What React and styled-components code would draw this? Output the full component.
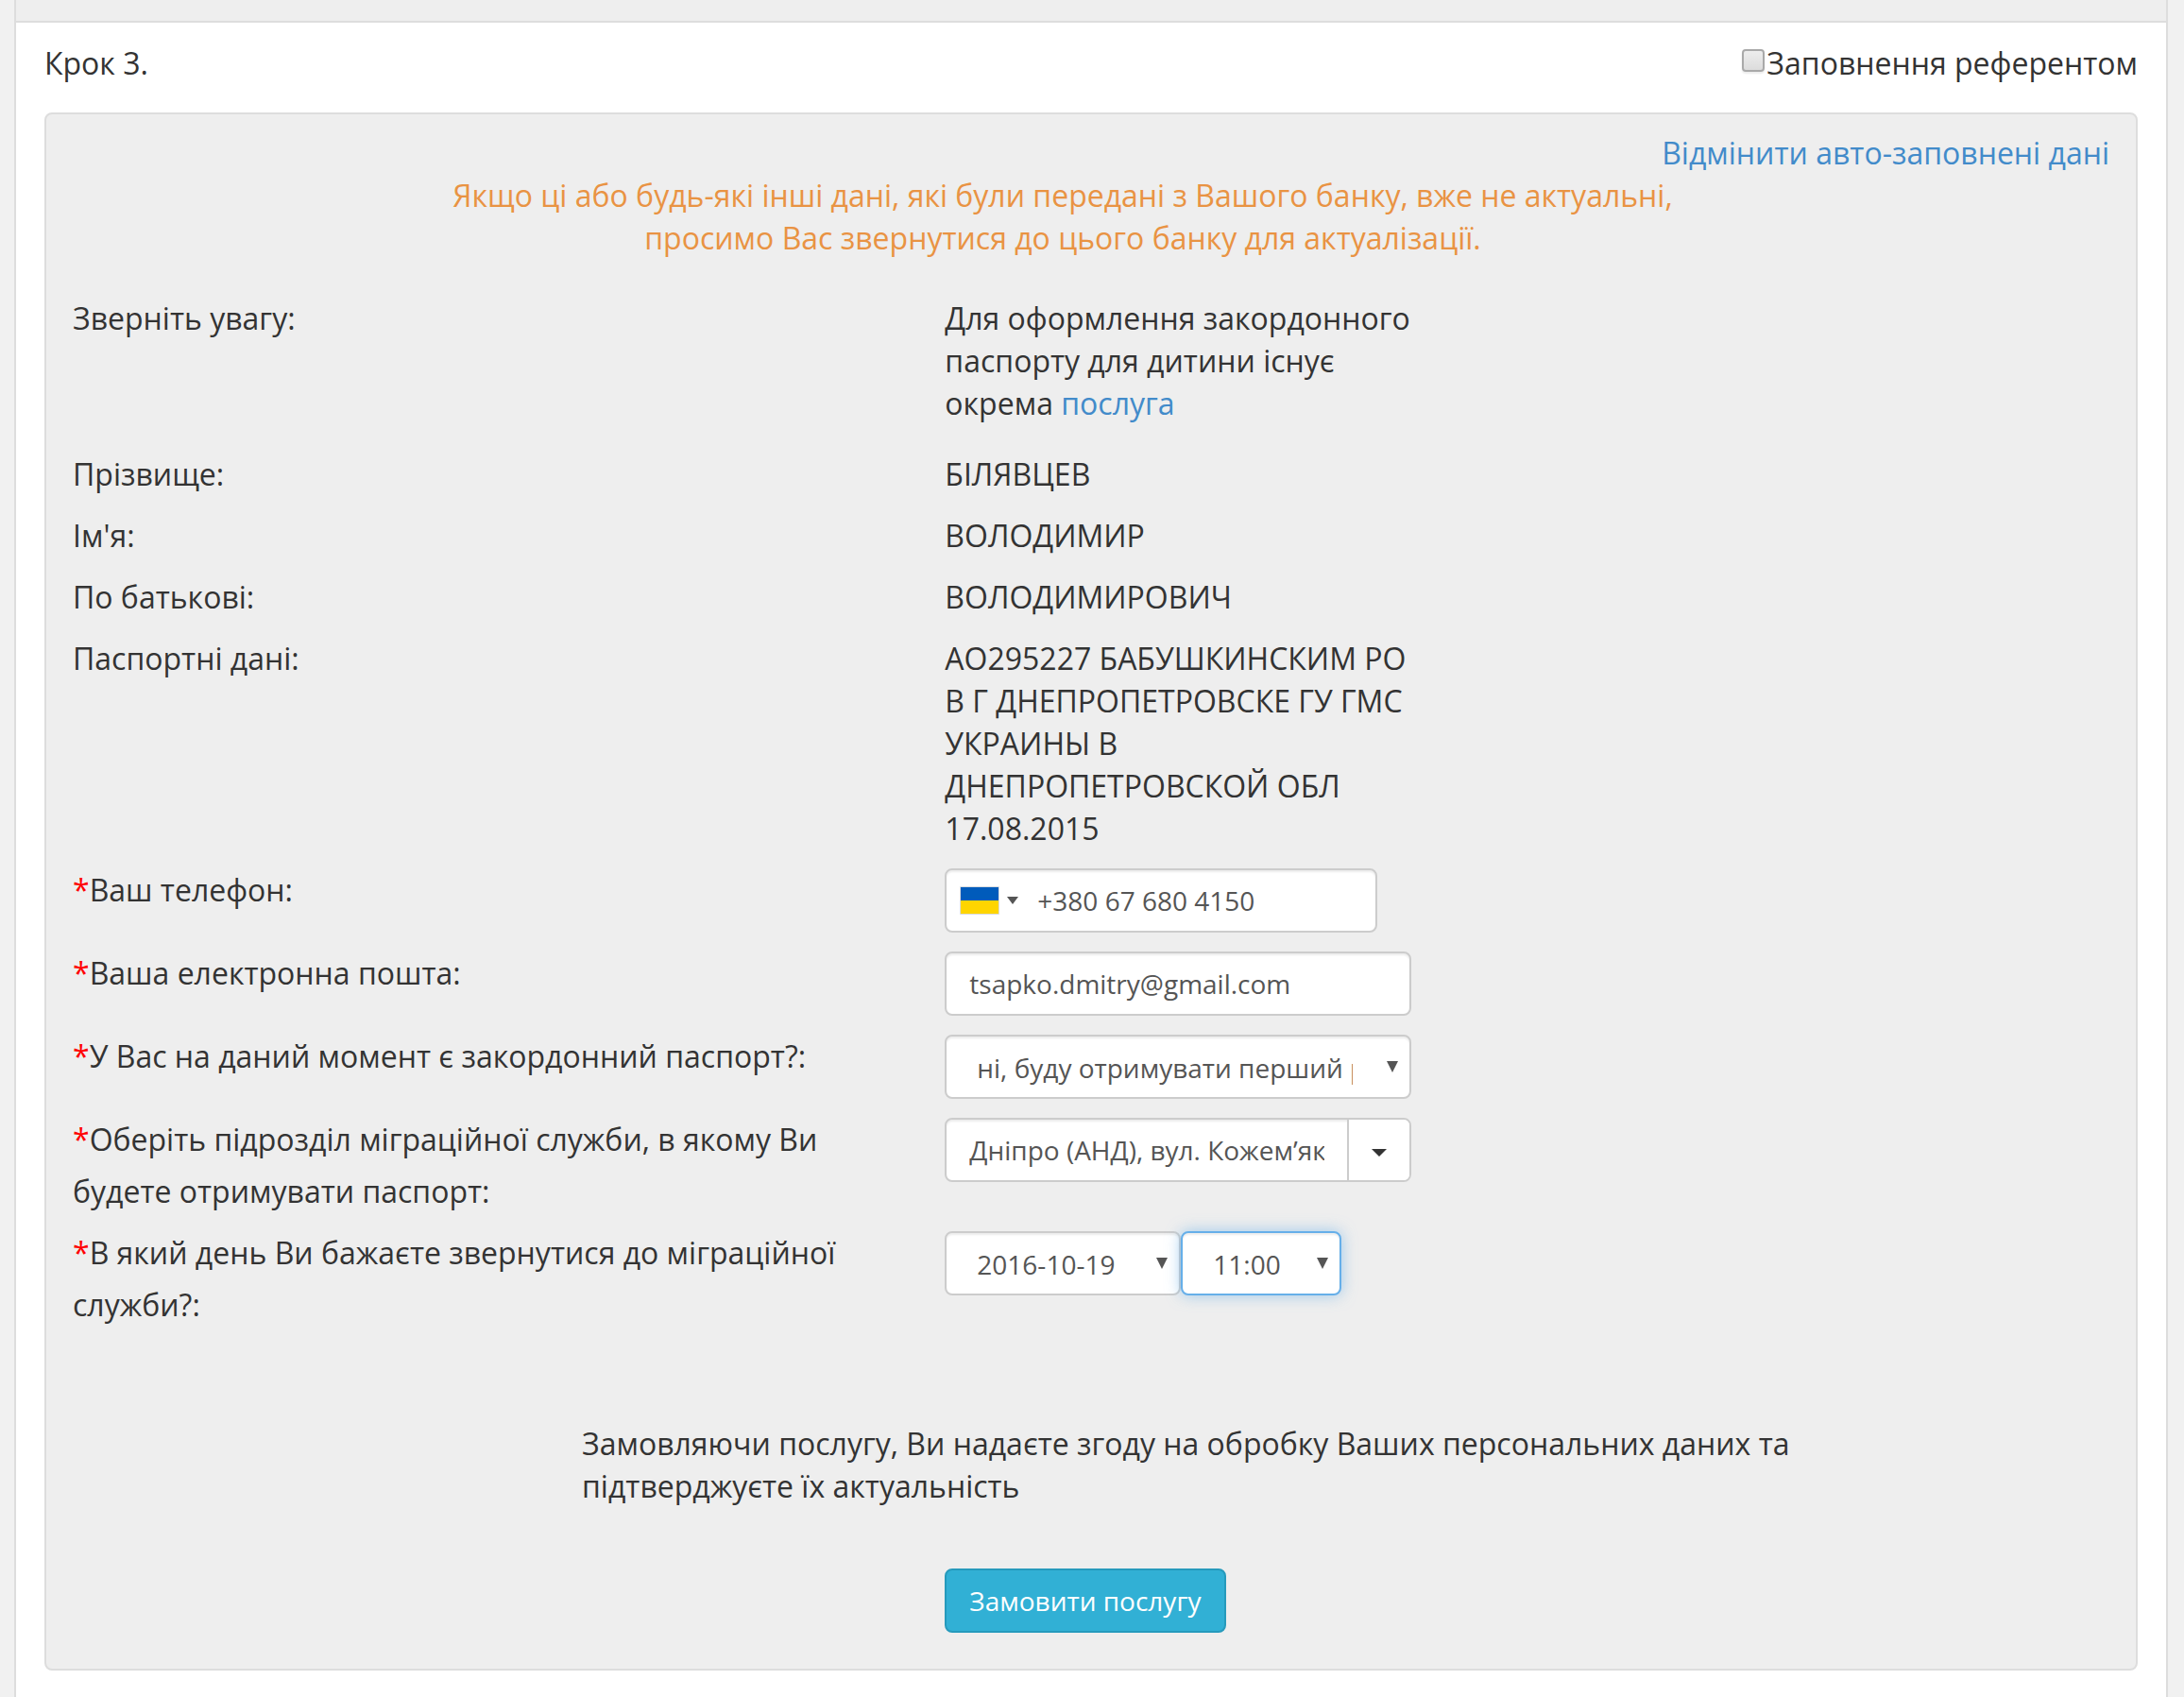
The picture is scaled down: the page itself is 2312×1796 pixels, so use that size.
import React from 'react';
import styled, { createGlobalStyle, css } from 'styled-components';

const GlobalStyle = createGlobalStyle`
  *, *::before, *::after { box-sizing: border-box; }
  body {
    margin: 0;
    background: #f1f1f1;
    color: #333;
    font-family: 'Open Sans', 'Noto Sans', sans-serif;
    font-size: 32px;
    line-height: 45px;
  }
  input, select, button { font-family: inherit; }
`;

const Page = styled.main`
  margin: 0 17px 0 15px;
  min-height: 100vh;
  background: #fff;
  border: solid #ddd;
  border-width: 0 2px;
`;

const TopStrip = styled.div`
  height: 24px;
  background: #eee;
  border-bottom: 2px solid #ddd;
`;

const Body = styled.div`
  padding: 20px 30px 28px;
`;

const StepHeader = styled.header`
  display: flex;
  justify-content: space-between;
  align-items: flex-start;
  margin-bottom: 30px;
`;

const StepTitle = styled.h1`
  margin: 0;
  font-size: 32px;
  font-weight: 400;
  line-height: 45px;
`;

const CheckLabel = styled.label`
  display: flex;
  align-items: flex-start;
  gap: 2px;
`;

const Checkbox = styled.input`
  appearance: none;
  width: 24px;
  height: 24px;
  margin: 8px 0 0;
  border: 2px solid #a9a9a9;
  border-radius: 4px;
  background: linear-gradient(#ededed, #dcdcdc);
  box-shadow: 0 2px 2px rgba(0, 0, 0, 0.08);
  &:checked { background: #428bca; }
`;

const Panel = styled.form`
  padding: 18px 28px 38px;
  background: #eee;
  border: 2px solid #ddd;
  border-radius: 8px;
`;

const Link = styled.a`
  color: #428bca;
  text-decoration: none;
`;

const PanelActions = styled.div`
  display: flex;
  justify-content: flex-end;
`;

const Warning = styled.p`
  margin: 0 0 35px;
  padding-right: 60px;
  color: #e99343;
  text-align: center;
`;

const Row = styled.div`
  display: grid;
  grid-template-columns: repeat(12, minmax(0, 1fr));
  column-gap: 60px;
  margin-bottom: ${(p) => (p.$spacious ? 20 : 10)}px;
`;

const labelText = css`
  grid-column: 1 / span 5;
  line-height: 55px;
`;

const FieldLabel = styled.label`${labelText}`;
const FieldName = styled.div`${labelText}`;

const Star = styled.span`
  color: #f00;
`;

const Value = styled.div`
  grid-column: 6 / span 3;
  padding: 5px 0;
`;

const controlFrame = css`
  height: 68px;
  border: 2px solid #ccc;
  border-radius: 8px;
  background: #fff;
  box-shadow: inset 0 2px 2px rgba(0, 0, 0, 0.075);
`;

const controlText = css`
  color: #555;
  font-size: 28px;
  line-height: 40px;
`;

const TextInput = styled.input`
  ${controlFrame}
  ${controlText}
  display: block;
  width: 100%;
  padding: 0 24px;
  outline: none;
`;

const Group = styled.div`
  ${controlFrame}
  display: flex;
  align-items: stretch;
  margin-right: ${(p) => (p.$inset ? 36 : 0)}px;
`;

const GroupInput = styled.input`
  ${controlText}
  flex: 1;
  min-width: 0;
  height: 100%;
  margin: 0 ${(p) => (p.$flush ? 0 : 24)}px;
  padding: 0;
  border: 0;
  background: transparent;
  outline: none;
`;

const CountryButton = styled.button`
  display: flex;
  align-items: center;
  gap: 8px;
  padding: 0 20px 0 14px;
  border: 0;
  background: transparent;
`;

const ToggleButton = styled.button`
  display: flex;
  align-items: center;
  justify-content: center;
  width: 66px;
  padding: 6px 0 0;
  border: 0;
  border-left: 2px solid #ccc;
  border-radius: 0 6px 6px 0;
  background: #fff;
`;

const SelectBox = styled.div`
  position: relative;
  width: ${(p) => p.$width || '100%'};
`;

const Select = styled.select`
  ${controlFrame}
  ${controlText}
  appearance: none;
  display: block;
  width: 100%;
  padding: 2px 60px 0 32px;
  outline: none;
  ${(p) => p.$active && css`
    border-color: #66afe9;
    box-shadow: inset 0 2px 2px rgba(0, 0, 0, 0.075), 0 0 16px rgba(102, 175, 233, 0.6);
  `}
`;

const SelectArrow = styled.svg`
  position: absolute;
  top: 28px;
  right: 14px;
  pointer-events: none;
`;

const Selects = styled.div`
  display: flex;
`;

const Consent = styled.p`
  width: 67%;
  margin: 97px 0 65px 25%;
`;

const SubmitButton = styled.button`
  grid-column: 6 / span 4;
  justify-self: start;
  height: 68px;
  padding: 0 24px;
  border: 2px solid #269abc;
  border-radius: 8px;
  background: #31b0d5;
  color: #fff;
  font-size: 28px;
  line-height: 40px;
`;

const SubmitRow = styled(Row)`
  margin-bottom: 0;
`;

const Flag = () => (
  <svg width="42" height="30" viewBox="0 0 42 30" aria-hidden="true">
    <rect width="42" height="30" rx="1" fill="#d9dbe0" />
    <rect x="1" y="1" width="40" height="14" fill="#005bbb" />
    <rect x="1" y="15" width="40" height="14" fill="#ffd500" />
  </svg>
);

const Caret = ({ width, height, color }) => (
  <svg width={width} height={height} viewBox="0 0 16 8" preserveAspectRatio="none" aria-hidden="true">
    <path d="M0 0h16L8 8z" fill={color} />
  </svg>
);

function SelectField({ id, label, options, width, active }) {
  return (
    <SelectBox $width={width}>
      <Select id={id} aria-label={label} $active={active}>
        {options.map((o) => <option key={o}>{o}</option>)}
      </Select>
      <SelectArrow width="12" height="12" viewBox="0 0 12 12" aria-hidden="true">
        <path d="M0 0h12L6 12z" fill="#555" />
      </SelectArrow>
    </SelectBox>
  );
}

function StaticRow({ name, spacious, children }) {
  return (
    <Row $spacious={spacious}>
      <FieldName>{name}</FieldName>
      <Value>{children}</Value>
    </Row>
  );
}

function FieldRow({ id, label, children }) {
  return (
    <Row>
      <FieldLabel htmlFor={id}><Star>*</Star>{label}</FieldLabel>
      <Value>{children}</Value>
    </Row>
  );
}

export default function App() {
  return (
    <>
      <GlobalStyle />
      <Page>
        <TopStrip />
        <Body>
          <StepHeader>
            <StepTitle>Крок 3.</StepTitle>
            <CheckLabel>
              <Checkbox type="checkbox" />
              Заповнення референтом
            </CheckLabel>
          </StepHeader>
          <Panel onSubmit={(e) => e.preventDefault()}>
            <PanelActions>
              <Link href="#reset">Відмінити авто-заповнені дані</Link>
            </PanelActions>
            <Warning>
              Якщо ці або будь-які інші дані, які були передані з Вашого банку, вже не актуальні,
              <br />
              просимо Вас звернутися до цього банку для актуалізації.
            </Warning>

            <StaticRow name="Зверніть увагу:" spacious>
              Для оформлення закордонного паспорту для дитини існує окрема <Link href="#service">послуга</Link>
            </StaticRow>
            <StaticRow name="Прізвище:">БІЛЯВЦЕВ</StaticRow>
            <StaticRow name="Ім'я:">ВОЛОДИМИР</StaticRow>
            <StaticRow name="По батькові:">ВОЛОДИМИРОВИЧ</StaticRow>
            <StaticRow name="Паспортні дані:">
              АО295227 БАБУШКИНСКИМ РО В Г ДНЕПРОПЕТРОВСКЕ ГУ ГМС УКРАИНЫ В ДНЕПРОПЕТРОВСКОЙ ОБЛ 17.08.2015
            </StaticRow>

            <FieldRow id="phone" label="Ваш телефон:">
              <Group $inset>
                <CountryButton type="button" aria-label="Україна">
                  <Flag />
                  <Caret width={12} height={8} color="#555" />
                </CountryButton>
                <GroupInput id="phone" type="tel" $flush defaultValue="+380 67 680 4150" />
              </Group>
            </FieldRow>
            <FieldRow id="email" label="Ваша електронна пошта:">
              <TextInput id="email" type="email" defaultValue="tsapko.dmitry@gmail.com" />
            </FieldRow>
            <FieldRow id="has-passport" label="У Вас на даний момент є закордонний паспорт?:">
              <SelectField id="has-passport" options={['ні, буду отримувати перший раз']} />
            </FieldRow>
            <FieldRow id="office" label="Оберіть підрозділ міграційної служби, в якому Ви будете отримувати паспорт:">
              <Group>
                <GroupInput id="office" type="text" defaultValue="Дніпро (АНД), вул. Кожем’якіна" />
                <ToggleButton type="button" aria-label="Показати список">
                  <Caret width={16} height={8} color="#333" />
                </ToggleButton>
              </Group>
            </FieldRow>
            <FieldRow id="visit-date" label="В який день Ви бажаєте звернутися до міграційної служби?:">
              <Selects>
                <SelectField id="visit-date" options={['2016-10-19']} width="250px" />
                <SelectField id="visit-time" label="Час" options={['11:00']} width="170px" active />
              </Selects>
            </FieldRow>

            <Consent>
              Замовляючи послугу, Ви надаєте згоду на обробку Ваших персональних даних та підтверджуєте їх актуальність
            </Consent>
            <SubmitRow>
              <SubmitButton type="submit">Замовити послугу</SubmitButton>
            </SubmitRow>
          </Panel>
        </Body>
      </Page>
    </>
  );
}
